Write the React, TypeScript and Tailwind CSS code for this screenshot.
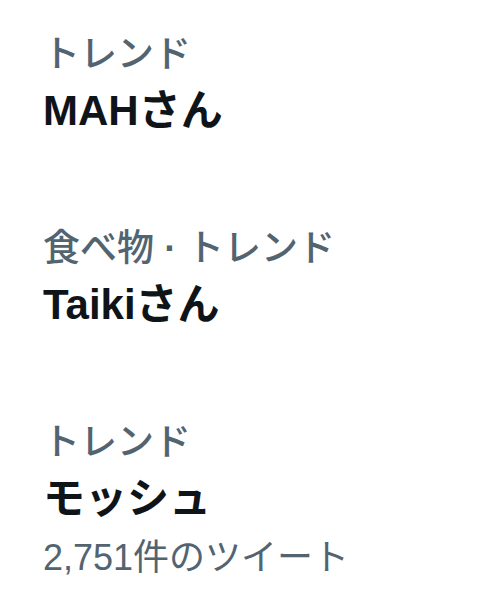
import React from "react";

type Trend = { label: string[]; title: string; count?: string };

const trends: Trend[] = [
  { label: ["トレンド"], title: "MAHさん" },
  { label: ["食べ物", "トレンド"], title: "Taikiさん" },
  { label: ["トレンド"], title: "モッシュ", count: "2,751件のツイート" },
];

const font = { fontFamily: '"Liberation Sans", "Noto Sans CJK JP", sans-serif' };

export default function App() {
  return (
    <div className="min-h-[608px] bg-white pt-[32px] pl-[43px]" style={font}>
      <div className="flex flex-col gap-[82px]">
        {trends.map((t, i) => (
          <div key={i} className="flex flex-col">
            <div className="text-[37px] leading-[45px] text-[#536471]">
              {t.label.map((part, j) => (
                <React.Fragment key={j}>
                  {j > 0 && <span className="font-bold"> · </span>}
                  <span className="font-medium">{part}</span>
                </React.Fragment>
              ))}
            </div>
            <div className="text-[42px] leading-[67px] font-bold text-[#0f1419]">{t.title}</div>
            {t.count && (
              <div className="text-[36px] leading-[52px] text-[#536471]">{t.count}</div>
            )}
          </div>
        ))}
      </div>
    </div>
  );
}
